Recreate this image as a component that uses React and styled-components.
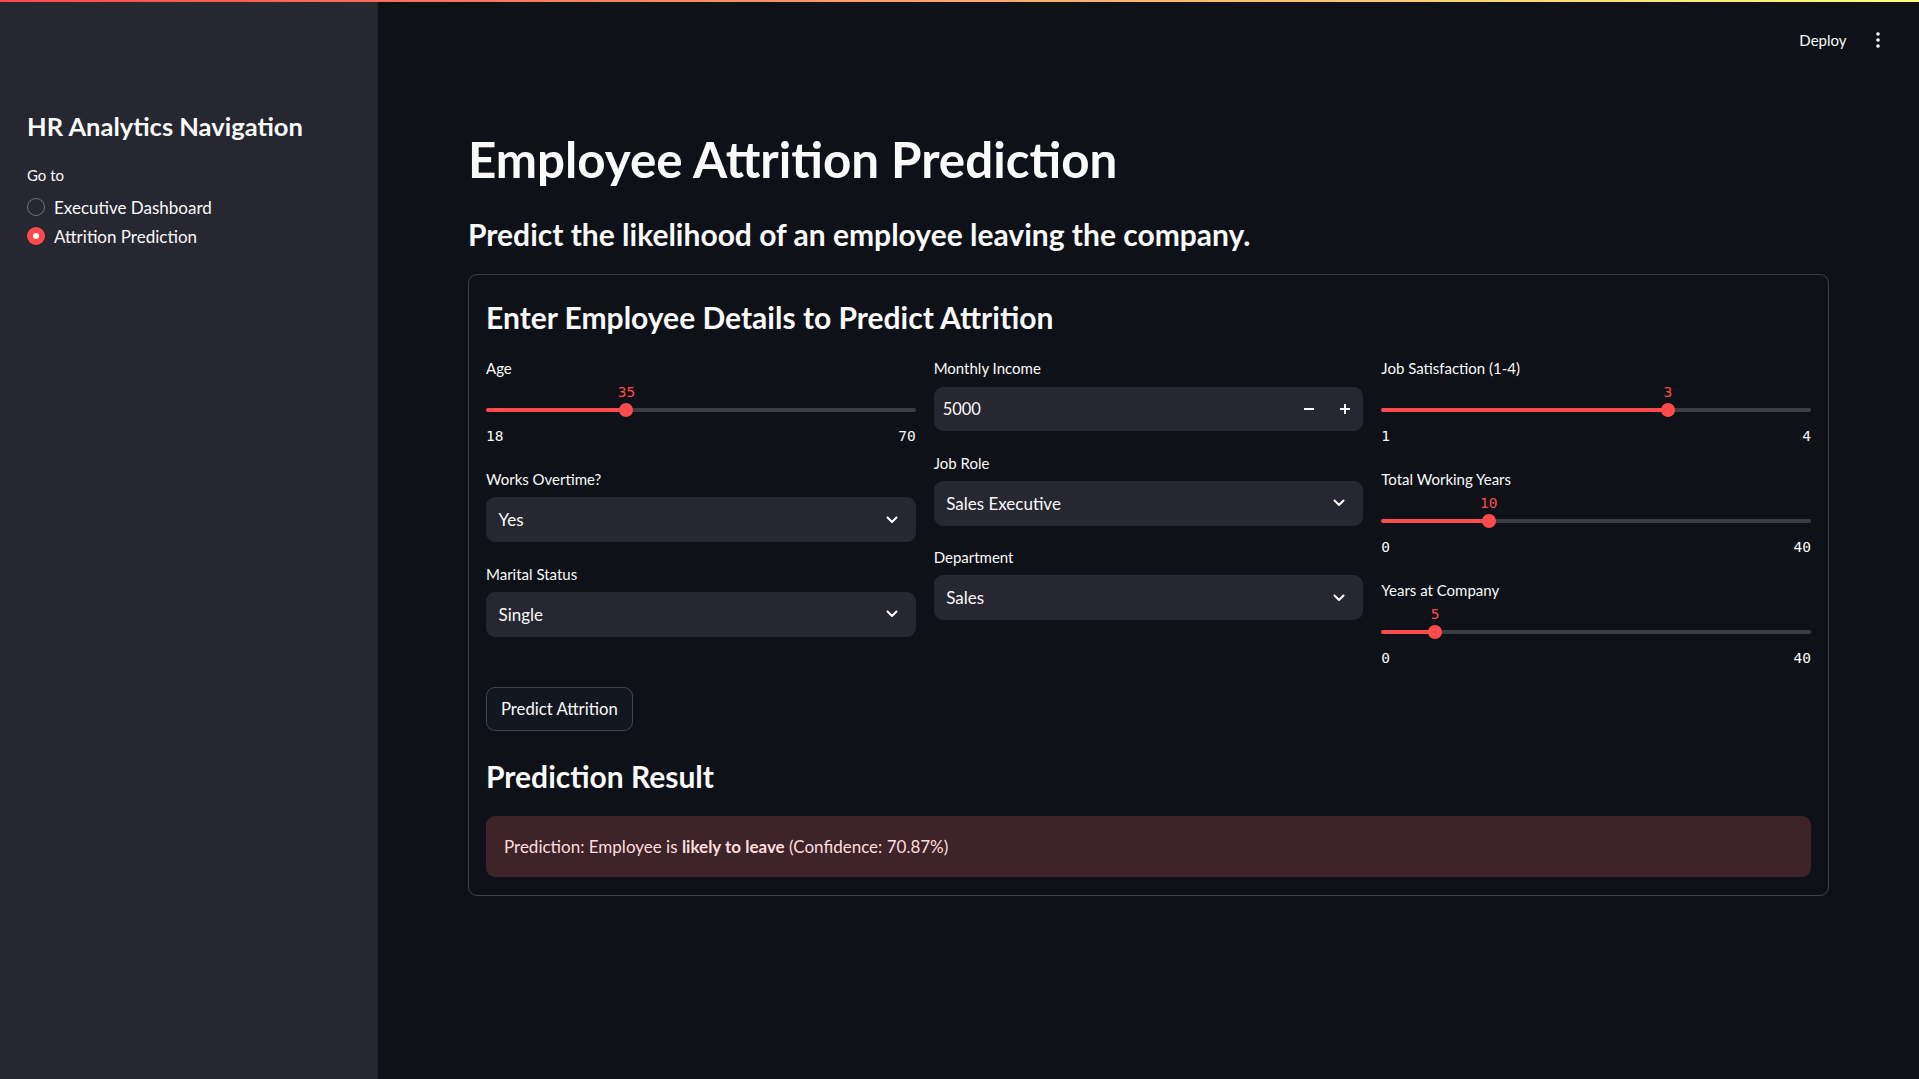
import React from "react";
import styled, { createGlobalStyle } from "styled-components";

const FONT = `Lato, "Noto Sans", sans-serif`;
const MONO = `"DejaVu Sans Mono", "Liberation Mono", monospace`;
const TEXT = "#fafafa";
const PRIMARY = "#ff4b4b";
const FIELD_BG = "#262730";
const RAIL_BG = "#3b3d45";
const BORDER = "rgba(250, 250, 250, 0.2)";

const GlobalStyle = createGlobalStyle`
  html, body {
    margin: 0;
    padding: 0;
    background: #0e1117;
  }
  body {
    font-family: ${FONT};
    color: ${TEXT};
    -webkit-font-smoothing: antialiased;
  }
  * {
    box-sizing: border-box;
  }
`;

const NAV_ITEMS = [
  { label: "Executive Dashboard", checked: false },
  { label: "Attrition Prediction", checked: true },
];

const ChevronDown = () => (
  <svg width="12" height="8" viewBox="0 0 12 8" fill="none">
    <path d="M1.5 1.5 L6 6 L10.5 1.5" stroke={TEXT} strokeWidth="2" strokeLinecap="round" strokeLinejoin="round" />
  </svg>
);

const MinusIcon = () => (
  <svg width="12" height="12" viewBox="0 0 12 12" fill="none">
    <path d="M1 6 H11" stroke={TEXT} strokeWidth="2" />
  </svg>
);

const PlusIcon = () => (
  <svg width="12" height="12" viewBox="0 0 12 12" fill="none">
    <path d="M1 6 H11 M6 1 V11" stroke={TEXT} strokeWidth="2" />
  </svg>
);

const KebabIcon = () => (
  <svg width="4" height="16" viewBox="0 0 4 16" fill={TEXT}>
    <circle cx="2" cy="2" r="1.8" />
    <circle cx="2" cy="8" r="1.8" />
    <circle cx="2" cy="14" r="1.8" />
  </svg>
);

const Slider = ({ label, value, min, max }) => {
  const pct = ((value - min) / (max - min)) * 100;
  return (
    <Field>
      <FieldLabel>{label}</FieldLabel>
      <SliderBody>
        <TrackArea>
          <Rail $pct={pct} />
          <Thumb style={{ left: `calc(${pct}% - 7px)` }}>
            <ThumbValue>{value}</ThumbValue>
          </Thumb>
        </TrackArea>
        <Ticks>
          <span>{min}</span>
          <span>{max}</span>
        </Ticks>
      </SliderBody>
    </Field>
  );
};

const SelectBox = ({ label, value }) => (
  <Field>
    <FieldLabel>{label}</FieldLabel>
    <Select>
      <span>{value}</span>
      <ChevronDown />
    </Select>
  </Field>
);

const App = () => {
  return (
    <>
      <GlobalStyle />
      <Page>
        <Decoration />
        <Body>
          <Sidebar>
            <SideTitle>HR Analytics Navigation</SideTitle>
            <GoToLabel>Go to</GoToLabel>
            <RadioList>
              {NAV_ITEMS.map((item) => (
                <RadioRow key={item.label}>
                  <RadioDot $checked={item.checked} />
                  <span>{item.label}</span>
                </RadioRow>
              ))}
            </RadioList>
          </Sidebar>
          <Main>
            <TopBar>
              <DeployText>Deploy</DeployText>
              <KebabIcon />
            </TopBar>
            <Content>
              <Title>Employee Attrition Prediction</Title>
              <Heading3 $top={26.6}>Predict the likelihood of an employee leaving the company.</Heading3>
              <Card>
                <Heading3 $top={0} $padTop={7}>
                  Enter Employee Details to Predict Attrition
                </Heading3>
                <Columns>
                  <Column>
                    <Slider label="Age" value={35} min={18} max={70} />
                    <SelectBox label="Works Overtime?" value="Yes" />
                    <SelectBox label="Marital Status" value="Single" />
                  </Column>
                  <Column>
                    <Field>
                      <FieldLabel>Monthly Income</FieldLabel>
                      <NumberInput>
                        <NumberValue>5000</NumberValue>
                        <StepButton>
                          <MinusIcon />
                        </StepButton>
                        <StepButton>
                          <PlusIcon />
                        </StepButton>
                      </NumberInput>
                    </Field>
                    <SelectBox label="Job Role" value="Sales Executive" />
                    <SelectBox label="Department" value="Sales" />
                  </Column>
                  <Column>
                    <Slider label="Job Satisfaction (1-4)" value={3} min={1} max={4} />
                    <Slider label="Total Working Years" value={10} min={0} max={40} />
                    <Slider label="Years at Company" value={5} min={0} max={40} />
                  </Column>
                </Columns>
                <PredictButton>Predict Attrition</PredictButton>
                <Heading3 $top={27}>Prediction Result</Heading3>
                <Alert>
                  Prediction: Employee is <strong>likely to leave</strong> (Confidence: 70.87%)
                </Alert>
              </Card>
            </Content>
          </Main>
        </Body>
      </Page>
    </>
  );
};

const Page = styled.div`
  display: flex;
  flex-direction: column;
  height: 100vh;
`;

const Decoration = styled.div`
  height: 2px;
  flex-shrink: 0;
  background: linear-gradient(90deg, ${PRIMARY}, #fffd80);
`;

const Body = styled.div`
  flex: 1;
  display: flex;
  min-height: 0;
`;

const Sidebar = styled.aside`
  width: 378px;
  flex-shrink: 0;
  background: ${FIELD_BG};
  padding: 108px 27px 0;
  display: flex;
  flex-direction: column;
`;

const SideTitle = styled.h2`
  margin: 0;
  font-size: 25.5px;
  font-weight: 700;
  line-height: 33.6px;
`;

const GoToLabel = styled.div`
  margin-top: 18px;
  font-size: 15px;
  line-height: 27px;
`;

const RadioList = styled.div`
  margin-top: 4px;
  display: flex;
  flex-direction: column;
`;

const RadioRow = styled.div`
  height: 29px;
  display: flex;
  align-items: center;
  gap: 9px;
  font-size: 17px;
`;

const RadioDot = styled.span`
  width: 18px;
  height: 18px;
  border-radius: 50%;
  flex-shrink: 0;
  position: relative;
  border: ${(p) => (p.$checked ? "none" : "1.5px solid rgba(250, 250, 250, 0.35)")};
  background: ${(p) => (p.$checked ? PRIMARY : "transparent")};
  &::after {
    content: "";
    display: ${(p) => (p.$checked ? "block" : "none")};
    position: absolute;
    left: 6px;
    top: 6px;
    width: 6px;
    height: 6px;
    border-radius: 50%;
    background: ${TEXT};
  }
`;

const Main = styled.main`
  flex: 1;
  min-width: 0;
  display: flex;
  flex-direction: column;
`;

const TopBar = styled.header`
  height: 76px;
  flex-shrink: 0;
  display: flex;
  justify-content: flex-end;
  align-items: center;
  gap: 29px;
  padding-right: 39.5px;
`;

const DeployText = styled.span`
  font-size: 15px;
`;

const Content = styled.div`
  padding: 52px 90px 0 90px;
  display: flex;
  flex-direction: column;
`;

const Title = styled.h1`
  margin: 0;
  font-size: 49.3px;
  font-weight: 700;
  line-height: 59.4px;
`;

const Heading3 = styled.h3`
  margin: ${(p) => p.$top}px 0 0;
  padding-top: ${(p) => p.$padTop || 0}px;
  font-size: 30px;
  font-weight: 700;
  line-height: 37.8px;
`;

const Card = styled.section`
  margin-top: 20px;
  border: 1px solid ${BORDER};
  border-radius: 9px;
  padding: 17px 17px 18px;
  display: flex;
  flex-direction: column;
`;

const Columns = styled.div`
  margin-top: 18px;
  display: grid;
  grid-template-columns: repeat(3, minmax(0, 1fr));
  gap: 18px;
  align-items: start;
`;

const Column = styled.div`
  display: flex;
  flex-direction: column;
  gap: 18px;
`;

const Field = styled.div`
  display: flex;
  flex-direction: column;
`;

const FieldLabel = styled.label`
  min-height: 27px;
  margin-bottom: 4.5px;
  display: flex;
  align-items: center;
  font-size: 15px;
`;

const SliderBody = styled.div`
  display: flex;
  flex-direction: column;
  padding: 17px 0 3.5px;
`;

const TrackArea = styled.div`
  position: relative;
  height: 14px;
  display: flex;
  align-items: center;
`;

const Rail = styled.div`
  width: 100%;
  height: 4px;
  border-radius: 2px;
  background: linear-gradient(
    90deg,
    ${PRIMARY} ${(p) => p.$pct}%,
    ${RAIL_BG} ${(p) => p.$pct}%
  );
`;

const Thumb = styled.div`
  position: absolute;
  top: 0;
  width: 14px;
  height: 14px;
  border-radius: 50%;
  background: ${PRIMARY};
`;

const ThumbValue = styled.span`
  position: absolute;
  bottom: calc(100% + 3px);
  left: 50%;
  transform: translateX(-50%);
  font-family: ${MONO};
  font-size: 14.5px;
  line-height: 16px;
  color: ${PRIMARY};
  white-space: nowrap;
`;

const Ticks = styled.div`
  margin-top: 11px;
  display: flex;
  justify-content: space-between;
  font-family: ${MONO};
  font-size: 14.5px;
  line-height: 16px;
`;

const Select = styled.div`
  height: 45px;
  border-radius: 9px;
  background: ${FIELD_BG};
  display: flex;
  align-items: center;
  justify-content: space-between;
  padding: 0 18px 0 12.5px;
  font-size: 17px;
`;

const NumberInput = styled.div`
  height: 44px;
  margin-top: 1px;
  border-radius: 9px;
  background: ${FIELD_BG};
  display: flex;
  align-items: center;
`;

const NumberValue = styled.span`
  flex: 1;
  padding-left: 9px;
  font-size: 16.5px;
`;

const StepButton = styled.span`
  width: 36px;
  height: 100%;
  display: flex;
  align-items: center;
  justify-content: center;
`;

const PredictButton = styled.button`
  align-self: flex-start;
  margin-top: 17.5px;
  height: 44px;
  padding: 0 14px;
  border: 1px solid ${BORDER};
  border-radius: 9px;
  background: rgb(19, 23, 32);
  color: ${TEXT};
  font-family: ${FONT};
  font-size: 16.7px;
`;

const Alert = styled.div`
  margin-top: 20px;
  padding: 18px;
  border-radius: 9px;
  background: rgb(62, 35, 40);
  color: rgb(255, 222, 222);
  font-size: 17px;
  line-height: 25px;

  strong {
    font-weight: 700;
  }
`;

export default App;
